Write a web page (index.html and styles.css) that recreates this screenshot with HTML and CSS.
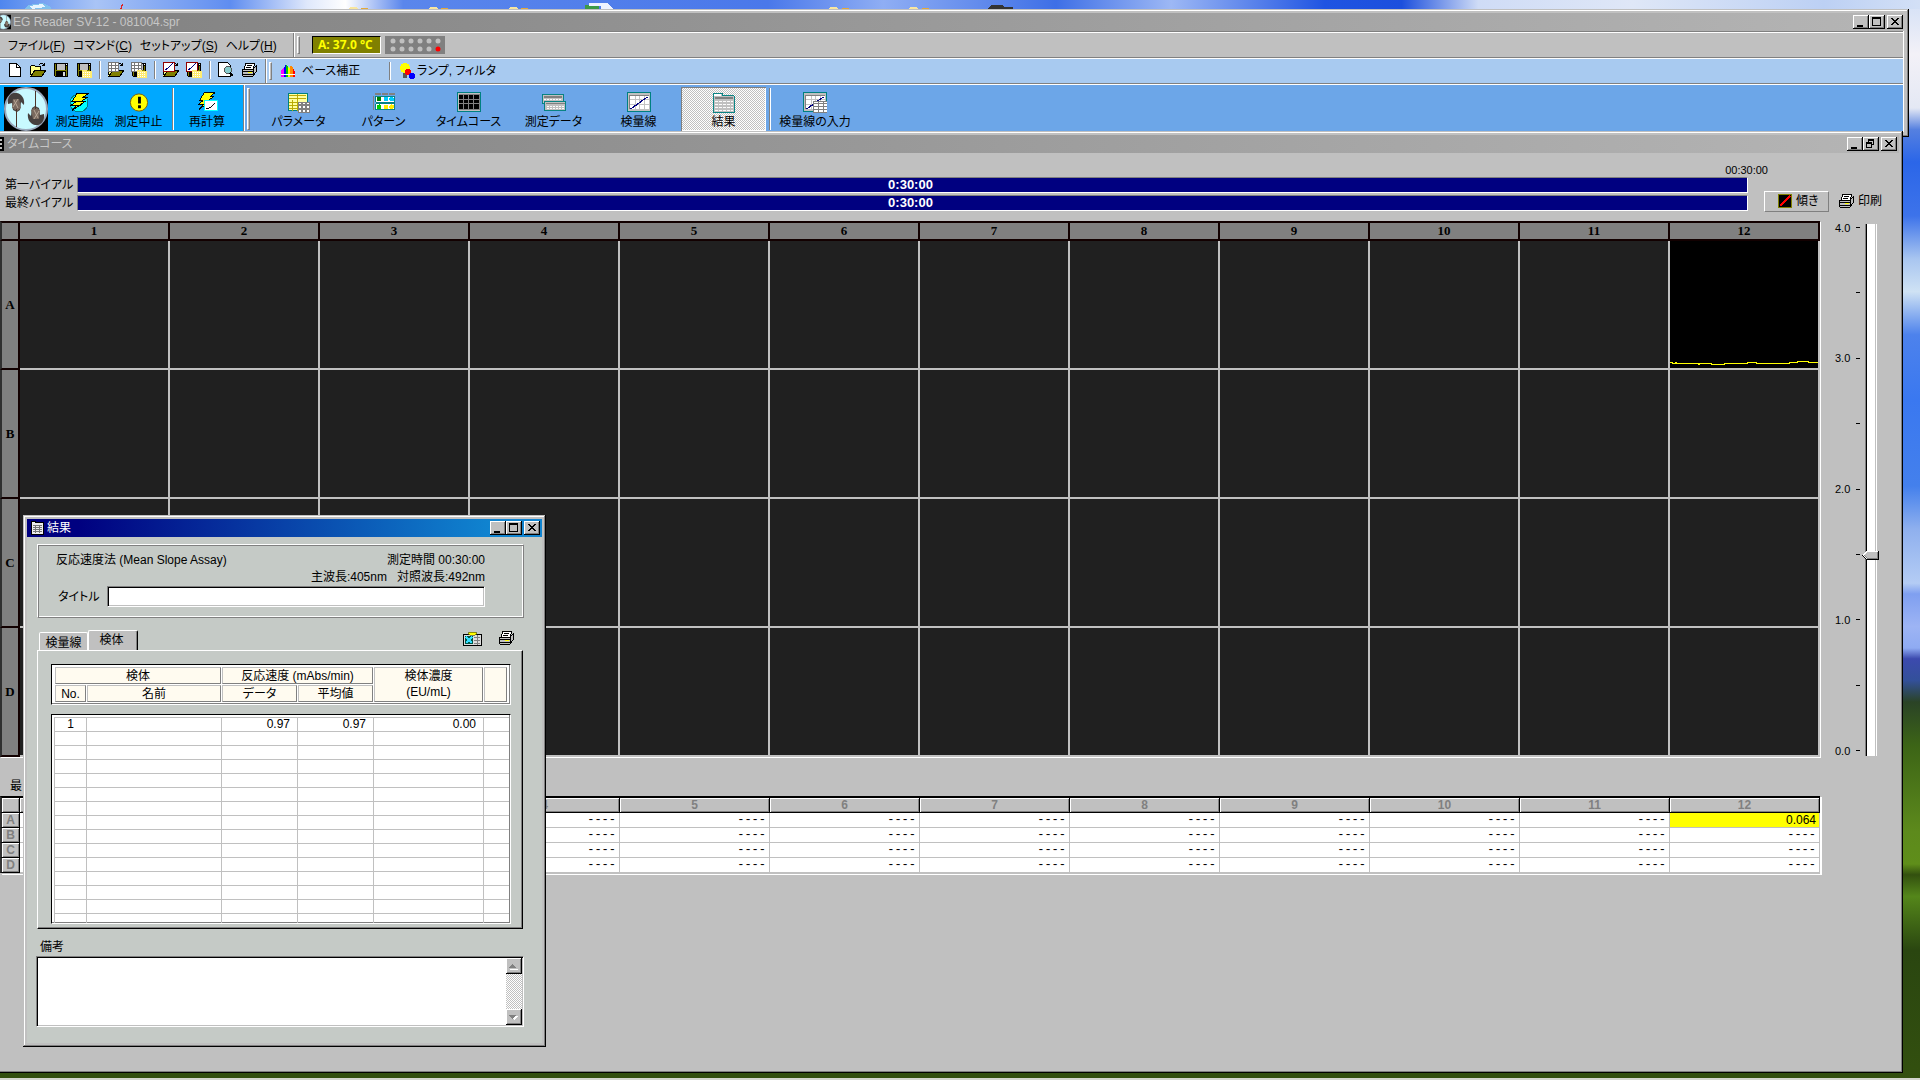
FILE: index.html
```html
<!DOCTYPE html>
<html lang="ja">
<head>
<meta charset="utf-8">
<title>EG Reader SV-12</title>
<link rel="stylesheet" href="styles.css">
</head>
<body>
<svg class="defs" aria-hidden="true">
  <symbol id="min" viewBox="0 0 16 14"><path d="M4 10h6v2H4z"/></symbol>
  <symbol id="max" viewBox="0 0 16 14"><path d="M3 2h9v9H3zM4 4v6h7V4z" fill-rule="evenodd"/></symbol>
  <symbol id="restore" viewBox="0 0 16 14"><path d="M5 2h6v6H9V7h1V4H6v1H5zM3 5h6v6H3zM4 7v3h4V7z" fill-rule="evenodd"/></symbol>
  <symbol id="close" viewBox="0 0 16 14"><path d="M4 3h2v1h1v1h2V4h1V3h2v1h-1v1h-1v1H9v1h1v1h1v1h1v1h-2V9H9V8H7v1H6v1H4V9h1V8h1V7h1V6H6V5H5V4H4z"/></symbol>
  <symbol id="folder" viewBox="0 0 16 16"><path d="M0 5h1V4h4v1h5v3H5L1 14H0z" fill="#ff8"/><path d="M0 4h1V3h4v1h6v4h-1V5H5V4H1v9H0z"/><path d="M1 14l4-6h11l-4 6z" fill="#808000" stroke="#000"/><path d="M9 2h1V1h3v1h1V1h1v3h-3V3h1V2h-3v1H9z"/></symbol>
  <symbol id="disk" viewBox="0 0 16 16"><path d="M1 1h14v14H2l-1-1z"/><path d="M2 2h1v12H2zM13 4h1v10h-1zM3 8h10v1H3z" fill="#808000"/><path d="M4 2h8v6H4z" fill="#c0c0c0"/><path d="M10 10h2v4h-2z" fill="#ddd"/><path d="M13 2h1v1h-1z" fill="#fff"/></symbol>
  <symbol id="foldmark" viewBox="0 0 16 16"><path d="M6 8h5v1h5v7H6z" fill="#ffec70"/><path d="M7 10h8M7 12h8M7 14h8" stroke="#fff" stroke-dasharray="1 1"/></symbol>
  <symbol id="sheet" viewBox="0 0 16 16"><path d="M0 0h11v10H0z" fill="#777"/><path d="M1 1h2v2H1zm3 0h3v2H4zm4 0h2v2H8zM1 4h2v2H1zm3 0h3v2H4zm4 0h2v2H8zM1 7h2v2H1zm3 0h3v2H4zm4 0h2v2H8z" fill="#fff"/></symbol>
  <symbol id="redgraph" viewBox="0 0 16 16"><path d="M0 0h12v10H0z" fill="#900000"/><path d="M1 1h10v8H1z" fill="#fff"/><path d="M2 8l3-2 5-5" stroke="#000080" fill="none"/></symbol>
  <symbol id="printer" viewBox="0 0 16 16"><path d="M5 1h9l-2 6H3z" fill="#fff" stroke="#000"/><path d="M6 3h5M5 5h5" stroke="#000"/><path d="M1 7h11l3-3v6l-3 4H2l-1-2z" fill="#c0c0c0" stroke="#000"/><path d="M1 9h11M2 12h10M12 7v7" stroke="#000"/><path d="M7 10h4v1H7z" fill="#ff0"/></symbol>
  <symbol id="bolt" viewBox="0 0 22 20"><path d="M8 1h11l-5 4h4l-6 4h4L3 18l4-5H2l5-4H3z" fill="#ff0" stroke="#000"/><path d="M8 9h8M6 13h6" stroke="#000"/></symbol>
  <symbol id="chart" viewBox="0 0 26 22"><path d="M0 0h26v21H0z" fill="#008080"/><path d="M1 1h24v19H1z" fill="#c0c0c0"/><path d="M3 3h20v15H3z" fill="#808080"/><path d="M4 4h19v14H4z" fill="#fff"/><path d="M9 4v14M14 4v14M19 4v14M4 8h19M4 13h19" stroke="#c0c0c0"/><path d="M4 18L22 5" stroke="#000080" stroke-width="1.3"/></symbol>
  <symbol id="crab" viewBox="0 0 44 44"><path d="M4 17c-1-7 3-12 9-11 5 1 8 6 7 12l-3-3-1 8-3 2-4-2-1-7z" fill="#46403e"/><path d="M9 12h6l2 9-4 3-5-3z" fill="#79695e"/><path d="M10 13l4 8M14 12l-5 8" stroke="#b7a797"/><path d="M12 22h1v18h-1z" fill="#4c3429"/></symbol>
  <symbol id="logo" viewBox="0 0 44 44"><path d="M0 0h44v44H0z"/><circle cx="22" cy="22" r="21" fill="#c8f9ff" stroke="#9aa8bc" stroke-width="2"/><use href="#crab" width="44" height="44"/><use href="#crab" width="44" height="44" transform="rotate(180 22 22)"/></symbol>
</svg>

<svg class="peek" width="1020" height="9" aria-hidden="true">
  <path d="M25 9l3-4 15-2 8 4v2z" fill="#7fc0ee"/><path d="M30 6l12-2 3 3-13 2z" fill="#e6f5ff"/>
  <path d="M120 9l2-5h1l-1 5z" fill="#e02020"/>
  <path d="M585 5h14v4h-14z" fill="#3c9a46"/><path d="M589 3h19l5 6h-12V6h-12z" fill="#eef3ff"/>
  <g fill="#f8e6a0"><path d="M349 9l1-2h7l1 2zM429 9l1-2h7l1 2zM509 9l1-2h7l1 2zM829 9l1-2h7l1 2zM909 9l1-2h7l1 2z"/></g>
  <g fill="#e3a93a"><path d="M361 8h7v1h-7zM441 8h7v1h-7zM521 8h7v1h-7zM842 8h7v1h-7zM922 8h7v1h-7z"/></g>
  <path d="M988 9l3-4h11l3 2h8v2z" fill="#333"/>
</svg>

<section class="window app" aria-label="EG Reader">
  <header class="titlebar idle">
    <svg class="appicon" viewBox="12 0 32 44"><use href="#logo" width="44" height="44"/></svg>
    <h1 class="caption">EG Reader SV-12 - 081004.spr</h1>
    <span class="winbtns">
      <button aria-label="最小化"><svg><use href="#min"/></svg></button><button aria-label="最大化"><svg><use href="#max"/></svg></button><button class="x" aria-label="閉じる"><svg><use href="#close"/></svg></button>
    </span>
  </header>
  <div class="client">
    <div class="band menuband">
      <nav class="menu">
        <button>ファイル(<u>F</u>)</button><button>コマンド(<u>C</u>)</button><button>セットアップ(<u>S</u>)</button><button>ヘルプ(<u>H</u>)</button>
      </nav>
      <i class="grip"></i>
      <output class="temp">A: 37.0 °C</output>
      <svg class="wells" width="60" height="18"><g fill="#c0c0c0"><circle cx="8" cy="5" r="2.5"/><circle cx="17" cy="5" r="2.5"/><circle cx="26" cy="5" r="2.5"/><circle cx="35" cy="5" r="2.5"/><circle cx="44" cy="5" r="2.5"/><circle cx="53" cy="5" r="2.5"/><circle cx="8" cy="13" r="2.5"/><circle cx="17" cy="13" r="2.5"/><circle cx="26" cy="13" r="2.5"/><circle cx="35" cy="13" r="2.5"/><circle cx="44" cy="13" r="2.5"/></g><circle cx="53" cy="13" r="2.5" fill="#f00"/></svg>
    </div>
    <div class="band smallband">
      <div class="tools">
        <button aria-label="新規"><svg><path d="M2.5 1.500h7l4 4v9h-11z" fill="#fff" stroke="#000"/><path d="M9.500 1.500v4h4" fill="none" stroke="#000"/></svg></button>
        <button aria-label="開く"><svg><use href="#folder"/></svg></button>
        <button aria-label="保存"><svg><use href="#disk"/></svg></button>
        <button aria-label="別名で保存"><svg><use href="#disk"/><use href="#foldmark"/></svg></button>
        <i class="sep"></i>
        <button aria-label="パターンを開く"><svg><use href="#folder"/><use href="#sheet"/></svg></button>
        <button aria-label="パターンを保存"><svg><use href="#disk"/><use href="#sheet"/><use href="#foldmark"/></svg></button>
        <i class="sep"></i>
        <button aria-label="検量線を開く"><svg><use href="#folder"/><use href="#redgraph"/></svg></button>
        <button aria-label="検量線を保存"><svg><use href="#disk"/><use href="#redgraph"/><use href="#foldmark"/></svg></button>
        <i class="sep"></i>
        <button aria-label="プレビュー"><svg><path d="M.5.5h9l3 3v11H.5z" fill="#fff" stroke="#000"/><circle cx="10" cy="8" r="3.500" fill="#8cc" stroke="#555"/><path d="M12 11l3 3" stroke="#000" stroke-width="2"/></svg></button>
        <button aria-label="印刷"><svg><use href="#printer"/></svg></button>
      </div>
      <i class="grip"></i>
      <button class="textbtn base"><svg><path d="M1 8l2-3h1v9H1z" fill="#f0f"/><path d="M4 5l2-4v13H4z" fill="#00f"/><path d="M6 1l2 3v10H6z" fill="#0c0"/><path d="M8 4l2 2v8H8z" fill="#ff0"/><path d="M10 5l1-3 2 3v9h-3z" fill="#f80"/><path d="M13 5l2 4v5h-2z" fill="#f00"/><path d="M1 11h14" stroke="#fff"/></svg>ベース補正</button>
      <i class="sep"></i>
      <button class="textbtn"><svg><circle cx="6" cy="5" r="5" fill="#ff0"/><path d="M4 10h4v5H4z" fill="#555"/><circle cx="9" cy="9" r="3" fill="#f00"/><circle cx="13" cy="13" r="3" fill="#00f"/></svg>ランプ, フィルタ</button>
    </div>
    <div class="band bigband">
      <div class="run">
        <svg class="logo"><use href="#logo"/></svg>
        <button><svg><circle cx="10" cy="11" r="9" fill="#00ffff" stroke="#00808a"/><use href="#bolt"/></svg>測定開始</button>
        <button><svg class="smooth" viewBox="0 0 22 22"><circle cx="11" cy="11" r="9" fill="#ff0" stroke="#806000"/><path d="M10 5h3v7h-3zM10 14h3v3h-3z"/></svg>測定中止</button>
        <i class="sep"></i>
        <button><svg viewBox="0 0 22 22"><use href="#bolt" width="22" height="20"/><path d="M8.500 8.500h13v11h-13z" fill="#fff" stroke="#0ff"/><path d="M10 18q5-1 9-7" fill="none" stroke="#000"/></svg>再計算</button>
      </div>
      <i class="grip"></i>
      <div class="views">
        <button><svg viewBox="0 0 26 22"><path d="M1 1h21v19H1z" fill="#008080"/><path d="M2 2h19v17H2z" fill="#ffffa0"/><path d="M2 4h18M2 7h18M6 8v12M11 2v18M3 11h14M3 14h14M3 17h14" stroke="#b8a800"/><path d="M12 10h12v12H12z" fill="#808080"/><path d="M13 11h2v2h-2zm4 0h2v2h-2zm4 0h2v2h-2zm-8 4h2v2h-2zm4 0h2v2h-2zm4 0h2v2h-2zm-8 4h2v2h-2zm4 0h2v2h-2zm4 0h2v2h-2z" fill="#fff"/></svg>パラメータ</button>
        <button><svg viewBox="0 0 26 22"><path d="M4 1h6v2H4zm7 0h6v2h-6zm7 0h6v2h-6zM1 4h2v7H1zm0 8h2v7H1z" fill="#808080"/><path d="M4.500 4.500h20v6h-20zM4.500 12.500h20v6h-20z" fill="#fff" stroke="#008080"/><circle cx="8" cy="7.500" r="2.500" fill="#008000"/><circle cx="15" cy="7.500" r="2.500" fill="#0cf"/><circle cx="21" cy="7.500" r="2.500" fill="#0cf"/><circle cx="8" cy="15.500" r="2.500" fill="#0c0"/><circle cx="15" cy="15.500" r="2.500" fill="#fe0"/><circle cx="21" cy="15.500" r="2.500" fill="#fe0"/></svg>パターン</button>
        <button><svg viewBox="0 0 26 22"><path d="M0 0h26v21H0z" fill="#008080"/><path d="M1 1h24v19H1z" fill="#c0c0c0"/><path d="M2 2h22v17H2z" fill="#808080"/><path d="M3 3h4v4H3zm5 0h4v4H8zm5 0h4v4h-4zm5 0h5v4h-5zM3 8h4v4H3zm5 0h4v4H8zm5 0h4v4h-4zm5 0h5v4h-5zM3 13h4v5H3zm5 0h4v5H8zm5 0h4v5h-4zm5 0h5v5h-5z"/></svg>タイムコース</button>
        <button><svg viewBox="0 0 26 22"><path d="M.5 2.500h22v10H.5z" fill="#c0c0c0" stroke="#008080"/><path d="M2 4h19v2H2z" fill="#808080"/><path d="M3 8h18" stroke="#fff" stroke-dasharray="2 1"/><path d="M3.500 9.500h22v10h-22z" fill="#c0c0c0" stroke="#008080"/><path d="M5 11h19v2H5z" fill="#808080"/><path d="M6 15h18M6 17h18" stroke="#fff" stroke-dasharray="2 1"/></svg>測定データ</button>
        <button><svg viewBox="0 0 26 22"><use href="#chart" width="26" height="22"/></svg>検量線</button>
        <button class="on" aria-pressed="true"><svg viewBox="0 0 26 22"><path d="M2.500 4V1.500h9V4h12v17.500h-21z" fill="#c0c0c0" stroke="#008080"/><path d="M3 2h7v2H3z" fill="#fff"/><path d="M4 5h18v2H4z" fill="#808080"/><path d="M4 10h18M4 13h18M4 16h18M4 19h18" stroke="#fff" stroke-dasharray="3 1"/></svg>結果</button>
        <i class="sep"></i>
        <button class="last"><svg viewBox="0 0 26 22"><use href="#chart" width="26" height="22"/><path d="M11 9h15v13H11z" fill="#808080"/><path d="M12 11h14M12 14h14M12 17h14M12 20h14" stroke="#fff" stroke-width="2" stroke-dasharray="4 1"/></svg>検量線の入力</button>
      </div>
    </div>
  </div>
</section>

<section class="window course" aria-label="タイムコース">
  <header class="titlebar idle">
    <svg class="courseicon" viewBox="0 0 4 14"><path d="M0 0h4v14H0z"/><path d="M0 2h2v2H0zM0 6h2v2H0zM0 10h2v2H0z" fill="#c0c0c0"/></svg>
    <h2 class="caption">タイムコース</h2>
    <span class="winbtns">
      <button aria-label="最小化"><svg><use href="#min"/></svg></button><button aria-label="元に戻す"><svg><use href="#restore"/></svg></button><button class="x" aria-label="閉じる"><svg><use href="#close"/></svg></button>
    </span>
  </header>
  <div class="status">
    <span class="total">00:30:00</span>
    <span class="vial first">第一バイアル</span><div class="bar first">0:30:00</div>
    <span class="vial second">最終バイアル</span><div class="bar second">0:30:00</div>
    <div class="actions">
      <button class="slope"><svg viewBox="0 0 14 14"><path d="M.5.5h13v13H.5z" stroke="#808000"/><path d="M2 12L12 2" stroke="#f00" stroke-width="1.500"/></svg>傾き</button>
      <button class="print"><svg><use href="#printer"/></svg>印刷</button>
    </div>
  </div>
  <div class="plot">
    <table class="plate">
      <thead><tr><th class="rowhead"></th><th>1</th><th>2</th><th>3</th><th>4</th><th>5</th><th>6</th><th>7</th><th>8</th><th>9</th><th>10</th><th>11</th><th>12</th></tr></thead>
      <tbody>
        <tr><th>A</th><td></td><td></td><td></td><td></td><td></td><td></td><td></td><td></td><td></td><td></td><td></td><td class="live"><svg viewBox="0 0 148 10" preserveAspectRatio="none"><path d="M0 4.500h2v1h3v-1h1v1h22v1h1v-1h12v1h13v-1h23v-1h9v1h33v-1h8v-1h11v1h10" fill="none" stroke="#ff0"/></svg></td></tr>
        <tr><th>B</th><td></td><td></td><td></td><td></td><td></td><td></td><td></td><td></td><td></td><td></td><td></td><td></td></tr>
        <tr><th>C</th><td></td><td></td><td></td><td></td><td></td><td></td><td></td><td></td><td></td><td></td><td></td><td></td></tr>
        <tr><th>D</th><td></td><td></td><td></td><td></td><td></td><td></td><td></td><td></td><td></td><td></td><td></td><td></td></tr>
      </tbody>
    </table>
    <div class="scale">
      <ol><li>4.0</li><li></li><li>3.0</li><li></li><li>2.0</li><li></li><li>1.0</li><li></li><li>0.0</li></ol>
      <input type="range" min="0" max="4" step="0.1" value="1.5" aria-label="スケール">
    </div>
  </div>
  <div class="latest">
    <h3>最</h3>
    <table class="values">
      <thead><tr><th class="rowhead"></th><th>1</th><th>2</th><th>3</th><th>4</th><th>5</th><th>6</th><th>7</th><th>8</th><th>9</th><th>10</th><th>11</th><th>12</th></tr></thead>
      <tbody>
        <tr><th>A</th><td></td><td></td><td></td><td>----</td><td>----</td><td>----</td><td>----</td><td>----</td><td>----</td><td>----</td><td>----</td><td class="hit">0.064</td></tr>
        <tr><th>B</th><td></td><td></td><td></td><td>----</td><td>----</td><td>----</td><td>----</td><td>----</td><td>----</td><td>----</td><td>----</td><td>----</td></tr>
        <tr><th>C</th><td></td><td></td><td></td><td>----</td><td>----</td><td>----</td><td>----</td><td>----</td><td>----</td><td>----</td><td>----</td><td>----</td></tr>
        <tr><th>D</th><td></td><td></td><td></td><td>----</td><td>----</td><td>----</td><td>----</td><td>----</td><td>----</td><td>----</td><td>----</td><td>----</td></tr>
      </tbody>
    </table>
  </div>
</section>

<section class="window result" aria-label="結果">
  <header class="titlebar active">
    <svg class="resicon" viewBox="0 0 13 14"><path d="M0 0h5v1h8v13H0z"/><path d="M1 1h3v1h8v11H1z" fill="#eee"/><path d="M2 4h9v1H2zM2 6h9v1H2zM2 8h9v1H2zM2 10h9v1H2zM4 4h1v8H4zM8 4h1v8H8z" fill="#777"/></svg>
    <h2 class="caption">結果</h2>
    <span class="winbtns">
      <button aria-label="最小化"><svg><use href="#min"/></svg></button><button aria-label="最大化"><svg><use href="#max"/></svg></button><button class="x" aria-label="閉じる"><svg><use href="#close"/></svg></button>
    </span>
  </header>
  <div class="summary">
    <p><span>反応速度法 (Mean Slope Assay)</span><span>測定時間 00:30:00</span></p>
    <p class="wave"><span>主波長:405nm</span><span>対照波長:492nm</span></p>
    <div class="field"><label for="title">タイトル</label><input id="title" type="text"></div>
  </div>
  <div class="tabrow">
    <div class="tabs" role="tablist"><button role="tab">検量線</button><button role="tab" class="sel" aria-selected="true">検体</button></div>
    <button class="iconbtn" aria-label="Excel"><svg viewBox="0 0 19 14"><path d="M0 2h19v12H0z"/><path d="M1 3h17v10H1z" fill="#ddd"/><path d="M11 5h6M11 8h6M11 11h6M14 3v10" stroke="#808080"/><path d="M2 4h8v8H2z" fill="#054"/><path d="M3 5l6 6M9 5l-6 6" stroke="#3df" stroke-width="2"/><path d="M5 2l1-2h7l1 2-2 1H7z" fill="#ff0" stroke="#440" stroke-width=".6"/></svg></button>
    <button class="iconbtn" aria-label="印刷"><svg viewBox="0 0 16 16"><use href="#printer" width="16" height="16"/></svg></button>
  </div>
  <div class="panel">
    <div class="headbox">
      <table class="heads">
        <colgroup><col class="c1"><col class="c2"><col class="c3"><col class="c3"><col class="c4"><col class="c5"></colgroup>
        <tr><th colspan="2">検体</th><th colspan="2">反応速度 (mAbs/min)</th><th rowspan="2">検体濃度<br>(EU/mL)</th><th rowspan="2"></th></tr>
        <tr><th>No.</th><th>名前</th><th>データ</th><th>平均値</th></tr>
      </table>
    </div>
    <div class="databox">
      <table class="data">
        <colgroup><col class="c1"><col class="c2"><col class="c3"><col class="c3"><col class="c4"><col class="c5"></colgroup>
        <tr><td>1</td><td></td><td>0.97</td><td>0.97</td><td>0.00</td><td></td></tr>
        <tr><td></td><td></td><td></td><td></td><td></td><td></td></tr>
        <tr><td></td><td></td><td></td><td></td><td></td><td></td></tr>
        <tr><td></td><td></td><td></td><td></td><td></td><td></td></tr>
        <tr><td></td><td></td><td></td><td></td><td></td><td></td></tr>
        <tr><td></td><td></td><td></td><td></td><td></td><td></td></tr>
        <tr><td></td><td></td><td></td><td></td><td></td><td></td></tr>
        <tr><td></td><td></td><td></td><td></td><td></td><td></td></tr>
        <tr><td></td><td></td><td></td><td></td><td></td><td></td></tr>
        <tr><td></td><td></td><td></td><td></td><td></td><td></td></tr>
        <tr><td></td><td></td><td></td><td></td><td></td><td></td></tr>
        <tr><td></td><td></td><td></td><td></td><td></td><td></td></tr>
        <tr><td></td><td></td><td></td><td></td><td></td><td></td></tr>
        <tr><td></td><td></td><td></td><td></td><td></td><td></td></tr>
        <tr class="cut"><td></td><td></td><td></td><td></td><td></td><td></td></tr>
      </table>
    </div>
  </div>
  <label class="notelabel" for="note">備考</label>
  <div class="notebox">
    <textarea id="note"></textarea>
    <div class="scroll">
      <button aria-label="上へ"><svg viewBox="0 0 14 14"><path d="M4 10h8v1H4z" fill="#fff"/><path d="M3 9h7L6.500 5z" fill="#808080"/></svg></button>
      <button aria-label="下へ"><svg viewBox="0 0 14 14"><path d="M4 6h8l-4 4z" fill="#fff"/><path d="M3 5h7L6.500 9z" fill="#808080"/></svg></button>
    </div>
  </div>
</section>
</body>
</html>
```
FILE: styles.css
```css
* { box-sizing: border-box; }

body {
  position: relative;
  margin: 0;
  min-height: 100vh;
  overflow: hidden;
  border-bottom: 2px solid #d4d6cf;
  font: 12px/14px "Liberation Sans", "Noto Sans CJK JP", sans-serif;
  font-feature-settings: "palt";
  color: #000;
  background:
    linear-gradient(90deg, #4f86ee 0, #a9c4f6 5%, #5f8df0 12%, #dfe8fb 16%, #fff 18%, #5a86ec 21%, #4a78ea 40%, #8faef4 46%, #3e6fe6 55%, #9db8f5 61%, #1f54e2 69%, #1c4fdd 73%, #cfdcf6 77%, #dfe7f7 85%, #bcd0f4 95%, #d3e0f6 100%) 0 0 / 100% 9px no-repeat,
    linear-gradient(180deg, #d3e0f6 0, #f3f1f7 5%, #e4e8f4 10%, #5580e0 12%, #2b66e8 15%, #3d73ea 20%, #a9c6f0 24%, #cfe2f4 27%, #4d82ec 31%, #3a78f0 37%, #4480ec 45%, #8fb0ee 49%, #b4ccf4 54%, #7f9ff0 55%, #9db4f4 58%, #8fabf2 60%, #3c4aae 61%, #33509a 63%, #2a4326 65%, #3c6416 69%, #5d8a1c 77%, #5f8e1a 80%, #33500f 81%, #54861a 83%, #2a4610 88%, #33500f 100%);
}

h1, h2, h3, p, ol { margin: 0; padding: 0; font: inherit; list-style: none; }
button, input, textarea { font: inherit; font-feature-settings: inherit; color: inherit; }
button { padding: 0; border: 0; background: none; white-space: nowrap; }
svg { display: block; flex: none; shape-rendering: crispEdges; }
.smooth, .logo, .appicon { shape-rendering: auto; }
table { table-layout: fixed; border-collapse: separate; border-spacing: 0; }
th, td { padding: 0; }

.defs { position: absolute; width: 0; height: 0; }
.peek { position: absolute; top: 0; left: 0; }

/* Windows */
.window {
  position: absolute;
  background: #c0c0c0;
  box-shadow: inset -1px -1px #000, inset 0 1px #c0c0c0, inset -2px -2px #808080, inset 0 2px #fff;
}
.app { top: 9px; left: 0; right: 11px; height: 128px; padding: 4px 6px 4px 0; }
.course { top: 131px; left: 0; right: 17px; bottom: 5px; padding: 4px 4px 0 0; }
.result {
  top: 515px; left: 23px; width: 523px; height: 532px; padding: 4px;
  background: #c5cac6;
  box-shadow: inset -1px -1px #000, inset 1px 1px #c0c0c0, inset -2px -2px #808080, inset 2px 2px #fff, inset 0 0 0 4px #c0c0c0;
}

.titlebar { display: flex; align-items: center; height: 18px; }
.idle { color: #c6c6c6; background: linear-gradient(90deg, #808080, #b5b5b5); }
.active { color: #fff; background: linear-gradient(90deg, #000080 10%, #1084d0 90%); padding-left: 4px; }
.caption { flex: 1; line-height: 18px; }
.appicon { width: 11px; height: 16px; margin-right: 2px; }
.courseicon { width: 4px; height: 14px; margin-right: 3px; }
.resicon { width: 13px; height: 14px; margin-right: 3px; }

.winbtns { display: flex; padding-right: 2px; }
.app .winbtns { padding-right: 0; }
.winbtns button, .scroll button {
  width: 16px; height: 14px;
  color: #000;
  background: #c0c0c0;
  box-shadow: inset -1px -1px #000, inset 1px 1px #fff, inset -2px -2px #808080;
}
.winbtns .x { margin-left: 2px; }
.winbtns svg { width: 16px; height: 14px; }

/* Toolbars */
.client { border-top: 1px solid #808080; box-shadow: 1px 0 #fff; }
.band { display: flex; align-items: center; border-top: 1px solid #fff; border-bottom: 1px solid #808080; }
.menuband { height: 26px; }
.smallband { height: 26px; background: #a8caf0; }
.bigband { height: 48px; background: #6ca6e8; border-bottom: 0; }
.sep { width: 2px; height: 18px; border-left: 1px solid #808080; border-right: 1px solid #fff; }
.grip { width: 3px; height: 18px; margin: 0 0 0 3px; background: #c0c0c0; border: 1px solid #fff; border-right-color: #808080; border-bottom-color: #808080; }
.menu, .tools, .run { display: flex; align-items: center; align-self: stretch; border-right: 1px solid #808080; box-shadow: 1px 0 #fff; }
.menu { width: 294px; padding: 1px 0 0 8px; gap: 8px; }
.menuband .grip { margin-right: 12px; }
.temp { width: 69px; height: 18px; margin-right: 4px; padding-left: 5px; border: 1px solid #000; border-right-color: #fff; border-bottom-color: #fff; background: #808000; color: #ff0; font: bold 12px/16px "Open Sans", sans-serif; white-space: nowrap; }
.wells { background: #808080; shape-rendering: auto; }

.tools { width: 266px; padding: 0 0 2px 7px; gap: 7px; }
.tools svg, .textbtn svg, .print svg { width: 16px; height: 16px; }
.textbtn { display: flex; align-items: center; gap: 6px; margin-left: 8px; padding-bottom: 1px; }
.textbtn + .sep + .textbtn { gap: 2px; }
.base { width: 109px; }

.run { width: 244px; padding-left: 4px; background: #00a8ff; }
.logo { width: 44px; height: 44px; margin-right: 2px; }
.run button, .views button { display: flex; flex-direction: column; align-items: center; gap: 2px; height: 44px; padding-top: 5px; }
.run button { width: 59px; }
.run button svg { width: 22px; height: 21px; }
.bigband .sep, .bigband .grip { height: 42px; }
.run .sep { margin-left: 4px; }
.run .sep + button { width: 66px; }
.views { display: flex; align-items: center; padding-left: 6px; }
.views button { width: 85px; }
.views button svg { width: 26px; height: 21px; }
.views .on {
  background: repeating-conic-gradient(#fff 0 25%, #c0c0c0 0 50%) 0 0 / 2px 2px;
  box-shadow: inset 1px 1px #808080, inset -1px -1px #fff;
}
.views .sep { margin-left: 3px; }
.views .last { width: 88px; }

/* Progress area */
.status { display: grid; grid-template: 10px 16px 16px / 72px 1fr 151px; row-gap: 2px; padding: 12px 0 0 5px; }
.total { grid-area: 1 / 2; justify-self: end; margin-right: -20px; line-height: 10px; font-size: 11px; }
.vial { grid-column: 1; line-height: 16px; }
.first { grid-row: 2; }
.second { grid-row: 3; }
.bar { grid-column: 2; border: 1px solid #fff; border-top-color: #808080; border-left-color: #808080; background: #000080; color: #fff; font-size: 13px; font-weight: bold; line-height: 14px; text-align: center; padding-right: 4px; }
.actions { grid-area: 1 / 3 / 4 / 4; display: flex; align-items: center; gap: 9px; padding: 26px 0 0 16px; }
.slope, .print { display: flex; align-items: center; gap: 4px; height: 21px; }
.slope { width: 65px; padding-left: 13px; border: 1px solid #fff; border-right-color: #808080; border-bottom-color: #808080; }
.slope svg { width: 14px; height: 14px; }

/* Plate */
.plot { display: flex; margin-top: 10px; }
.plate { flex: 1; width: 0; box-shadow: 1px 1px #fff; font: bold 13px/16px "Liberation Serif", serif; }
.rowhead { width: 20px; }
.plate th { height: 20px; background: #808080; border-right: 2px solid #120000; border-bottom: 2px solid #120000; }
.plate thead th { border-top: 2px solid #120000; }
.plate th:first-child { border-left: 2px solid #303030; }
.plate td { height: 129px; background: #202020; border-right: 2px solid #c0c0c0; border-bottom: 2px solid #c0c0c0; }
.plate .live { background: #000; vertical-align: bottom; }
.live svg { width: 100%; height: 10px; }

.scale { display: flex; flex: none; width: 79px; height: 536px; padding-left: 15px; }
.scale ol { display: flex; flex-direction: column; justify-content: space-between; width: 27px; }
.scale li { display: flex; justify-content: space-between; align-items: center; height: 13px; font-size: 11px; padding-right: 2px; }
.scale li::after { content: ""; width: 4px; height: 1px; margin-left: auto; background: #000; }
.scale input {
  appearance: none; writing-mode: vertical-lr; direction: rtl;
  width: 17px; height: 532px; margin: 3px 0 0;
  background: linear-gradient(90deg, transparent 3px, #808080 3px 4px, #000 4px 5px, #fff 5px 13px, #c0c0c0 13px 14px, #fff 14px 15px, transparent 15px);
}
.scale input::-webkit-slider-thumb {
  appearance: none; width: 17px; height: 9px; border: 0; border-radius: 0;
  background: url("data:image/svg+xml,%3Csvg xmlns='http://www.w3.org/2000/svg' width='17' height='9' shape-rendering='crispEdges'%3E%3Cpath d='M0 4L4 0H17V9H4Z' fill='%23000'/%3E%3Cpath d='M0 4L4 0H16V8H4Z' fill='%23fff'/%3E%3Cpath d='M2 4L5 1H16V8H5Z' fill='%23808080'/%3E%3Cpath d='M2 4L5 1H15V7H5Z' fill='%23c0c0c0'/%3E%3C/svg%3E") no-repeat;
}

/* Latest values */
.latest { padding: 22px 79px 0 0; }
.latest h3 { padding-left: 10px; line-height: 14px; }
.values { width: 100%; margin-top: 3px; border-bottom: 1px solid #c0c0c0; box-shadow: 2px 1px #fff; }
.values th { height: 15px; color: #808080; background: #c0c0c0; border: 1px solid #000; border-width: 0 1px 1px 0; box-shadow: inset 1px 1px #fff, inset -1px -1px #808080; }
.values thead th { height: 17px; border-top-width: 2px; }
.values th:first-child { border-left-width: 2px; border-left-color: #333; }
.values td { background: #fff; border-right: 1px solid #c0c0c0; border-bottom: 1px solid #c0c0c0; padding-right: 3px; text-align: right; font: 12px/14px "Liberation Mono", monospace; }
.values .hit { background: #ff0; font: 12px/14px "Liberation Sans", sans-serif; }

/* Result window */
.summary { margin: 7px 18px 0 10px; height: 74px; padding: 8px 38px 0 18px; border: 1px solid #fff; border-right-color: #808080; border-bottom-color: #808080; box-shadow: inset 1px 1px #808080, inset -1px -1px #fff; }
.summary p { display: flex; justify-content: space-between; height: 17px; }
.summary .wave { justify-content: flex-end; gap: 10px; height: 16px; }
.field { display: flex; align-items: center; gap: 7px; padding-left: 2px; }
.field input { flex: 1; min-width: 0; height: 21px; padding: 0 3px; border: 1px solid #808080; border-right-color: #fff; border-bottom-color: #fff; box-shadow: inset 1px 1px #000, inset -1px -1px #c0c0c0; background: #fff; }

.tabrow { display: flex; align-items: flex-end; gap: 16px; height: 20px; margin: 12px 28px 0 12px; }
.tabs { display: flex; align-items: flex-end; flex: 1; height: 20px; }
.tabs button { width: 49px; height: 18px; padding-top: 2px; background: #c0c0c0; border: 1px solid #fff; border-bottom: 0; border-radius: 2px 2px 0 0; }
.tabs .sel { width: 50px; height: 20px; padding: 0 3px 2px 0; border-right: 1px solid #000; box-shadow: inset -1px 0 #808080; }
.iconbtn { padding-bottom: 4px; }
.iconbtn svg { width: 19px; height: 14px; }
.iconbtn + .iconbtn svg { width: 16px; height: 16px; }

.panel { margin: 0 19px 0 10px; height: 279px; padding: 13px 11px 0 13px; border: 1px solid #fff; border-right-color: #000; border-bottom-color: #000; box-shadow: inset -1px -1px #808080; }
.headbox, .databox { border: 1px solid #000; border-right-color: #fff; border-bottom-color: #fff; box-shadow: inset -1px -1px #808080; background: #fff; overflow: hidden; }
.headbox { height: 41px; padding: 1px 2px; }
.heads { width: 100%; border-spacing: 1px; line-height: 14px; }
.heads th { height: 17px; font-weight: normal; background: #fffbf0; border: 1px solid #c0c0c0; border-right-color: #808080; border-bottom-color: #808080; white-space: nowrap; }
.heads th[rowspan] { vertical-align: top; line-height: 16px; }
.heads .c1 { width: 31px; }
.heads .c2 { width: 134px; }
.heads .c3 { width: 75px; }
.heads .c4 { width: 109px; }
.databox { height: 210px; margin-top: 9px; padding: 2px 1px 1px 2px; }
.data { width: 100%; border-top: 1px solid #c0c0c0; border-left: 1px solid #c0c0c0; line-height: 13px; }
.data td { height: 14px; border-right: 1px solid #c0c0c0; border-bottom: 1px solid #c0c0c0; padding-right: 7px; text-align: right; }
.data td:first-child { padding: 0; text-align: center; }
.data td:last-child { border-right: 0; }
.data .cut td { height: 9px; border-bottom: 0; }
.data .c1 { width: 32px; }
.data .c2 { width: 135px; }
.data .c3 { width: 76px; }
.data .c4 { width: 110px; }

.notelabel { display: block; margin: 11px 0 0 13px; line-height: 14px; }
.notebox { display: flex; height: 71px; margin: 2px 18px 0 9px; border: 1px solid #808080; border-right-color: #fff; border-bottom-color: #fff; box-shadow: inset 1px 1px #000, inset -1px -1px #c0c0c0; background: #fff; padding: 1px; }
.notebox textarea { flex: 1; min-width: 0; padding: 2px; border: 0; resize: none; background: none; outline: 0; }
.scroll { display: flex; flex-direction: column; justify-content: space-between; width: 16px; background: repeating-conic-gradient(#fff 0 25%, #c0c0c0 0 50%) 0 0 / 2px 2px; }
.scroll button { height: 16px; }
.scroll svg { width: 14px; height: 14px; }
```
